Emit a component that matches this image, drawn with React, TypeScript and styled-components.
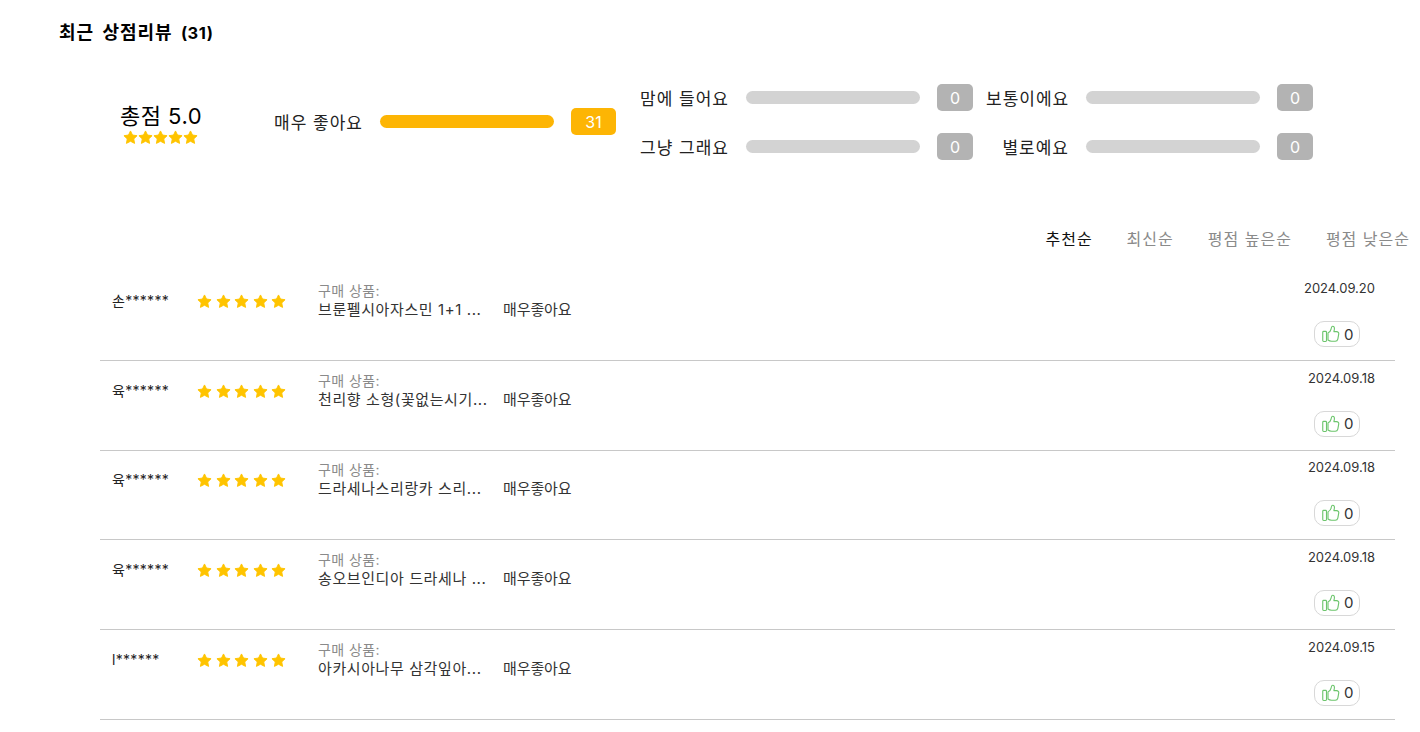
import React from 'react'
import styled, { createGlobalStyle } from 'styled-components'

const GlobalStyle = createGlobalStyle`
  html, body {
    margin: 0;
    padding: 0;
    background: #fff;
    font-family: Inter, "Noto Sans CJK KR", sans-serif;
    color: #000;
  }
  * { box-sizing: border-box; }
`

const Page = styled.div`
  width: 1420px;
  height: 732px;
  overflow: hidden;
`

const Heading = styled.h2`
  margin: 0;
  padding: 22px 0 0 59px;
  height: 84px;
  font-size: 18px;
  line-height: 22px;
  font-weight: 700;
  letter-spacing: 1px;
  word-spacing: 3px;
`

const HeadingCount = styled.span`
  font-size: 16.5px;
  letter-spacing: 0.5px;
`

const Summary = styled.section`
  display: flex;
  height: 76px;
  padding-left: 100px;
`

const Total = styled.div`
  width: 122px;
  padding-top: 19px;
  display: flex;
  flex-direction: column;
  align-items: center;
`

const TotalScore = styled.div`
  font-size: 22px;
  line-height: 27px;
  letter-spacing: 0.5px;
`

const MiniStars = styled.div`
  display: flex;
  margin: 0 2px 0 0;
`

const TopRating = styled.div`
  padding-top: 24px;
`

const RatingGrid = styled.div`
  display: grid;
  grid-template-columns: 347px 328px;
  grid-auto-rows: 49px;
  margin-left: 23px;
`

const RatingRow = styled.div`
  display: flex;
  align-items: center;
  height: 27px;
`

const RatingLabel = styled.span<{ $width: number }>`
  width: ${p => p.$width}px;
  text-align: right;
  font-size: 17px;
  letter-spacing: 1px;
  color: #222;
  white-space: nowrap;
`

const Bar = styled.div<{ $active?: boolean }>`
  width: 174px;
  height: 13px;
  margin-left: 17px;
  border-radius: 7px;
  background: ${p => (p.$active ? '#fdb504' : '#d3d3d3')};
`

const Count = styled.span<{ $active?: boolean }>`
  width: ${p => (p.$active ? 45 : 36)}px;
  height: 27px;
  margin-left: 17px;
  border-radius: 5px;
  background: ${p => (p.$active ? '#fdb504' : '#b3b3b3')};
  color: #fff;
  font-size: 16px;
  line-height: 28px;
  text-align: center;
`

const SortBar = styled.nav`
  display: flex;
  justify-content: flex-end;
  gap: 34px;
  height: 40px;
  margin-top: 67px;
  padding-right: 10px;
  font-size: 16px;
  line-height: 24px;
  letter-spacing: 1px;
`

const SortItem = styled.span<{ $active?: boolean }>`
  color: ${p => (p.$active ? '#111' : '#8a8a8a')};
  white-space: nowrap;
`

const List = styled.ul`
  list-style: none;
  margin: 4.6px 25px 0 100px;
  padding: 0;
`

const Row = styled.li`
  display: flex;
  height: 89.6px;
  border-bottom: 1px solid #c8c8c8;
  padding: 9.6px 20px 0 12px;
`

const Author = styled.span`
  width: 85px;
  padding-top: 10px;
  font-size: 14px;
  line-height: 20px;
  letter-spacing: 0.3px;
  color: #222;
`

const RowStars = styled.div`
  width: 121px;
  padding-top: 13px;
  display: flex;
  gap: 3.6px;
  height: 30px;
`

const Product = styled.div`
  width: 185px;
`

const ProductLabel = styled.div`
  font-size: 14px;
  line-height: 19px;
  letter-spacing: 0.4px;
  color: #8a8a8a;
`

const ProductName = styled.div`
  font-size: 15px;
  line-height: 19px;
  letter-spacing: 0.6px;
  color: #333;
  white-space: nowrap;
`

const Comment = styled.span`
  flex: 1;
  padding-top: 19px;
  font-size: 15px;
  line-height: 19px;
  letter-spacing: -0.1px;
  color: #333;
`

const Side = styled.div`
  display: flex;
  flex-direction: column;
  align-items: flex-end;
`

const DateText = styled.span`
  margin-top: -1px;
  font-size: 13px;
  line-height: 16px;
  color: #333;
`

const LikeButton = styled.button`
  display: flex;
  align-items: center;
  gap: 4px;
  width: 46px;
  height: 26px;
  margin: 25px 15px 0 0;
  padding: 0 0 0 7px;
  background: #fff;
  border: 1px solid #d8d8d8;
  border-radius: 10px;
  font: inherit;
  font-size: 15px;
  color: #333;
`

const Star = ({ size }: { size: number }) => (
  <svg width={size} height={size} viewBox="0 0 24 24" fill="#ffc400">
    <path d="M12 1.5L15.2 8.05 22.5 9.1 17.2 14.2 18.5 21.4 12 18 5.5 21.4 6.8 14.2 1.5 9.1 8.8 8.05z" stroke="#ffc400" strokeWidth="1.5" strokeLinejoin="round" />
  </svg>
)

const ThumbIcon = () => (
  <svg width="18" height="18" viewBox="0 0 24 24" fill="none" stroke="#6cc56c" strokeWidth="1.5" strokeLinejoin="round" strokeLinecap="round">
    <rect x="1" y="8.5" width="5" height="13.5" rx="1.2" />
    <path d="M8 10.5c2.2-1.2 3.8-3 4.2-5.4.2-1.4.3-3.3 1.9-3.5 1.9-.2 2.7 2 2.4 3.9l-.6 3.3h3.6c1.9 0 3.2 1.6 2.8 3.4l-1.2 6.6c-.4 1.7-1.7 2.8-3.4 2.8h-5c-1.9 0-3.4-.6-4.7-1.6z" />
  </svg>
)

const reviews = [
  { author: '손******', product: '브룬펠시아자스민 1+1 ...', date: '2024.09.20' },
  { author: '육******', product: '천리향 소형(꽃없는시기...', date: '2024.09.18' },
  { author: '육******', product: '드라세나스리랑카 스리...', date: '2024.09.18' },
  { author: '육******', product: '송오브인디아 드라세나 ...', date: '2024.09.18' },
  { author: 'l******', product: '아카시아나무 삼각잎아...', date: '2024.09.15' },
]

const ratings = [
  { label: '맘에 들어요', width: 90 },
  { label: '보통이에요', width: 83 },
  { label: '그냥 그래요', width: 90 },
  { label: '별로예요', width: 83 },
]

export default function App() {
  return (
    <Page>
      <GlobalStyle />
      <Heading>최근 상점리뷰 <HeadingCount>(31)</HeadingCount></Heading>
      <Summary>
        <Total>
          <TotalScore>총점 5.0</TotalScore>
          <MiniStars>
            {[0, 1, 2, 3, 4].map(i => <Star key={i} size={15} />)}
          </MiniStars>
        </Total>
        <TopRating>
          <RatingRow>
            <RatingLabel $width={141}>매우 좋아요</RatingLabel>
            <Bar $active />
            <Count $active>31</Count>
          </RatingRow>
        </TopRating>
        <RatingGrid>
          {ratings.map(r => (
            <RatingRow key={r.label}>
              <RatingLabel $width={r.width}>{r.label}</RatingLabel>
              <Bar />
              <Count>0</Count>
            </RatingRow>
          ))}
        </RatingGrid>
      </Summary>
      <SortBar>
        <SortItem $active>추천순</SortItem>
        <SortItem>최신순</SortItem>
        <SortItem>평점 높은순</SortItem>
        <SortItem>평점 낮은순</SortItem>
      </SortBar>
      <List>
        {reviews.map((r, i) => (
          <Row key={i}>
            <Author>{r.author}</Author>
            <RowStars>
              {[0, 1, 2, 3, 4].map(s => <Star key={s} size={15} />)}
            </RowStars>
            <Product>
              <ProductLabel>구매 상품:</ProductLabel>
              <ProductName>{r.product}</ProductName>
            </Product>
            <Comment>매우좋아요</Comment>
            <Side>
              <DateText>{r.date}</DateText>
              <LikeButton>
                <ThumbIcon />0
              </LikeButton>
            </Side>
          </Row>
        ))}
      </List>
    </Page>
  )
}
